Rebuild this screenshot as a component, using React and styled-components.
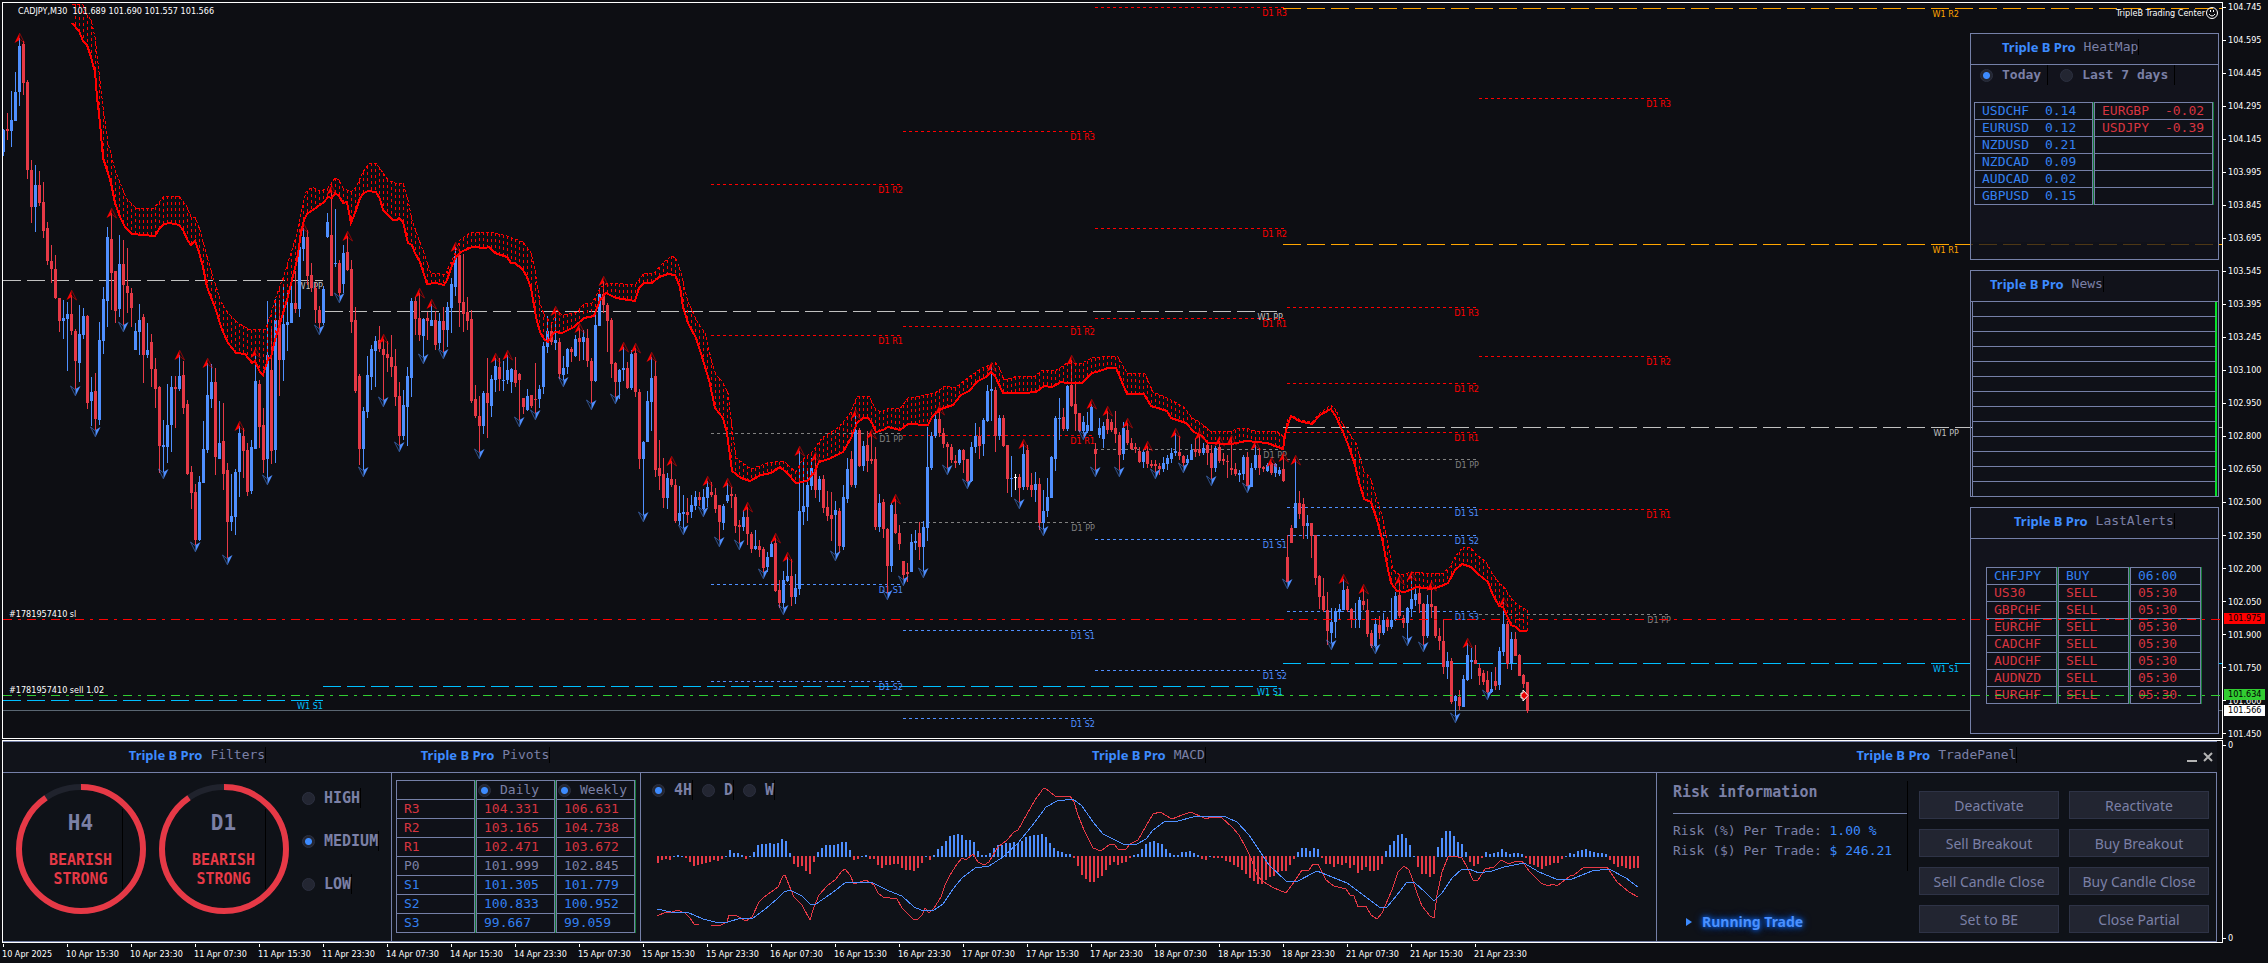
import React, { useState } from "react";
import styled, { createGlobalStyle, css } from "styled-components";

// ========================= chart data =========================
// one entry per M30 bar: direction (b = bull, r = bear, w = doji), high, body top, body bottom, low
const candles = `
b129,130,152,156 r113,129,131,140 b91,120,131,147 b72,92,121,121 b38,46,92,106 r41,44,83,95 r80,82,170,179 r160,170,207,223
b165,185,207,232 r171,185,203,206 r182,202,231,238 r222,228,261,265 r245,261,269,283 r255,269,298,299 r298,298,321,332 b300,318,321,339
b302,314,319,371 r295,314,331,335 r329,331,361,389 b305,334,363,382 b308,316,335,339 r315,316,403,409 b377,392,401,426 r373,391,419,430
b322,340,420,425 b287,299,341,354 b227,237,301,327 r213,239,273,310 r271,271,311,323 b235,264,309,317 r240,264,285,325 r248,286,293,313
r288,293,308,327 b323,331,350,350 b304,320,332,355 r314,317,355,383 b323,350,355,358 r334,342,369,387 r358,369,389,408 r386,387,446,473
b420,445,447,472 b384,425,447,463 b376,387,425,452 r376,387,389,428 b355,376,389,391 r361,375,408,414 r400,404,474,475 r466,472,493,509
r484,492,540,545 b476,482,540,541 b421,449,483,483 b363,395,450,453 b364,382,399,408 r368,382,457,475 b401,443,459,459 r403,441,474,490
r463,470,522,558 b474,516,522,531 b469,472,517,535 b426,433,472,497 r428,436,451,478 r443,450,492,496 b440,447,491,494 b353,381,449,449
r380,384,427,448 r408,425,460,473 b301,355,459,478 r328,370,451,464 b299,320,450,463 r300,320,360,396 b285,324,360,381 b290,322,325,351
b280,303,323,323 r271,303,309,313 b245,247,309,317 b228,237,249,261 r230,237,276,285 r263,275,288,292 r283,288,310,323 r306,310,323,328
b286,289,323,325 b213,222,237,238 r190,235,296,296 b209,263,264,267 r260,263,293,296 b245,253,284,293 r236,252,270,271 r260,269,322,333
r307,320,391,393 r374,376,449,465 b407,411,449,470 b356,375,412,418 b345,349,377,390 b336,341,351,387 r326,340,349,352 r339,349,355,400
r341,354,358,372 r335,357,367,377 r349,366,397,406 r382,396,436,445 b390,405,436,440 b367,376,407,446 b298,301,378,397 r297,301,319,335
r293,318,335,341 b318,319,336,357 r312,318,321,340 b304,320,326,326 r311,320,345,350 b313,321,343,349 r307,321,330,352 b302,307,330,347
b278,284,308,333 b247,256,287,296 r253,255,303,327 r254,302,314,332 r297,312,321,330 r310,319,401,403 r385,399,416,418 r396,416,426,452
b391,393,426,434 r358,393,403,438 b375,379,406,417 b358,366,380,392 r358,367,379,391 b361,380,381,391 b355,370,380,384 b368,369,382,393
r357,370,383,387 r373,374,380,420 r398,398,407,414 b389,396,410,411 r395,395,406,408 r363,399,400,413 b385,389,399,408 b342,346,387,394
b316,331,347,353 r323,331,342,345 b311,340,343,350 r338,342,374,379 b356,368,375,380 b348,349,367,374 r347,349,352,362 b335,339,356,357
r328,338,342,361 b330,337,342,360 r329,338,361,367 r358,361,381,403 b315,325,381,382 b288,294,326,326 r281,294,305,313 r303,305,321,352
r318,320,364,378 r362,363,382,397 b369,370,382,399 b347,368,370,381 r362,368,388,389 b350,354,388,390 r348,353,392,397 r389,392,459,469
b441,442,459,515 b391,401,442,442 b357,378,402,431 r361,376,470,477 r440,468,476,490 r458,474,498,508 b473,478,498,509 r461,479,485,487
r479,485,521,523 b486,513,521,525 b495,512,514,528 r498,512,515,523 b495,505,512,518 b491,497,506,510 r492,497,500,506 b489,497,509,510
b481,487,498,507 r482,492,495,497 r488,495,509,513 r505,505,522,540 b504,506,523,530 b483,495,501,503 r487,494,496,508 r494,497,526,533
r520,525,527,543 b510,517,527,531 r507,517,534,545 r532,534,549,553 b530,546,549,550 r540,546,550,557 r547,549,568,572 b552,557,567,572
b541,544,557,557 r538,543,591,592 r580,590,603,608 b571,580,603,608 b557,576,581,582 r559,576,597,606 b574,588,597,604 b451,511,589,595
b460,506,512,525 b470,485,507,521 b458,468,486,490 r457,470,490,498 b476,479,490,502 r475,479,508,513 r491,507,516,521 r492,515,519,541
b501,510,515,554 r508,511,546,553 b485,497,547,550 b458,469,499,503 r451,459,485,487 b414,430,485,488 r428,430,466,467 b441,446,466,471
r431,445,461,472 r434,459,461,464 r447,459,527,530 b494,503,527,532 r499,502,529,538 r528,529,566,593 b503,505,566,572 r499,514,533,534
r525,533,544,550 r561,561,575,579 r563,572,574,582 b534,542,572,572 b530,541,543,550 r522,533,547,560 b521,527,547,571 b427,467,528,541
b432,436,468,470 b415,419,436,438 r410,419,433,437 r428,433,444,448 r442,444,447,468 r444,447,460,463 r455,461,463,468 b449,450,463,465
r449,450,460,473 r459,459,481,482 b442,447,481,482 b423,436,447,453 r427,436,446,459 b418,420,444,456 b385,391,421,422 b367,389,391,421
r387,390,436,452 b415,418,436,440 r415,418,446,447 r445,445,479,493 b456,478,479,497 w474,477,478,490 r474,477,488,502 b444,454,487,490
r445,450,487,490 r473,485,490,497 b472,484,490,502 r478,484,523,530 b490,511,523,529 b478,497,511,517 b456,457,498,498 b416,418,459,471
b398,418,419,440 r408,417,429,431 b385,386,429,431 r360,385,406,407 r383,404,414,431 r413,413,431,432 b416,422,431,433 b412,425,431,433
b404,407,431,431 r443,449,454,470 b418,428,435,438 b422,426,439,448 r411,419,430,434 r419,422,430,432 r411,428,434,443 r432,435,455,470
b422,428,454,460 r423,430,443,445 r438,443,449,450 r443,447,449,453 r447,451,462,463 b450,452,462,468 r446,451,464,468 r460,464,466,468
r460,464,466,472 r463,466,469,475 b457,463,469,472 b455,458,464,470 b448,453,459,463 b433,451,453,456 r436,452,456,460 r455,456,463,466
b455,459,463,465 b444,450,460,460 r438,449,452,457 r435,449,453,456 b443,448,453,455 r442,445,453,465 r445,453,468,479 b446,448,468,472
r441,447,461,463 r453,459,461,465 r455,461,462,478 r440,468,470,475 r463,469,474,476 b470,473,475,482 b455,457,474,480 r452,457,486,486
b463,468,487,487 b445,455,468,470 r448,455,468,475 r466,467,469,472 b463,465,471,472 r462,463,473,475 b463,464,473,477 b467,470,474,476
r457,469,481,482 r535,557,582,582 r525,528,543,543 b460,503,528,528 r491,503,514,519 r498,504,526,539 b515,523,526,539 r523,523,536,558
r535,535,578,585 r575,576,597,609 r578,596,610,612 r592,610,631,645 b608,622,633,643 b608,611,622,638 b604,609,612,620 b579,590,610,610
r586,589,610,612 r608,609,619,628 b603,619,620,628 b597,600,620,628 r589,601,605,610 r599,610,634,637 r630,633,646,648 b618,624,646,647
r616,625,633,639 b613,620,633,635 r617,620,627,631 b598,620,627,629 b592,596,620,621 r580,595,616,618 r615,618,623,628 b607,608,623,639
b576,599,609,617 b587,594,600,606 r585,593,604,613 r603,604,636,645 b595,604,636,638 r586,604,607,618 r606,606,636,638 r628,636,641,650
r620,641,667,674 b652,661,667,679 r658,661,702,704 b695,696,701,716 r690,697,706,710 b675,679,707,707 b643,655,680,681 b648,660,662,679
r645,660,664,664 r664,668,676,685 r670,673,682,685 r671,680,692,693 b672,689,692,693 r667,681,686,690 b647,651,685,690 b602,624,652,656
r621,624,664,669 b632,639,663,670 r632,639,656,656 r654,655,676,676 r674,675,684,688 r682,682,711,713`
  .trim()
  .split(/\s+/)
  .map((c) => [c[0], ...c.slice(1).split(",").map(Number)]);

// bars that carry a fractal arrow
const fractalsUp = [
  4, 17, 27, 44, 51, 59, 63, 75, 82, 86, 95, 104, 107, 113, 123, 126, 138, 144, 150, 155, 158, 162, 167, 176, 181, 186, 193, 196,
  199, 203, 213, 217, 223, 234, 247, 255, 267, 272, 276, 281, 286, 293, 299, 304, 307, 313, 317, 320, 323, 335, 340, 349, 352, 357,
  366, 375,
];
const fractalsDown = [
  18, 23, 30, 40, 48, 56, 66, 79, 84, 90, 95, 99, 105, 110, 119, 129, 133, 140, 147, 153, 160, 170, 175, 179, 184, 190, 195, 208,
  221, 225, 230, 236, 241, 254, 260, 270, 273, 279, 288, 295, 302, 311, 321, 332, 343, 351, 355, 363, 371,
];

const toPoints = (str) => str.trim().split(/\s+/).map((p) => p.split(",").map(Number));

const bandLow = toPoints(`
72,23 79,31 83,41 87,45 91,57 95,72 97,97 100,123 103,158 108,173 111,183 115,203 120,217 125,227 132,234 143,235 155,236 159,229
164,224 170,223 179,225 183,230 188,241 191,245 195,241 199,252 203,267 207,287 216,310 221,327 228,343 236,353 245,354 252,363
255,361 260,372 263,375 268,359 271,357 275,340 281,320 287,300 292,280 297,260 301,233 304,220 307,214 317,207 324,202 328,197
332,198 335,193 339,196 343,203 347,202 351,223 355,213 360,198 364,193 368,191 376,192 380,199 383,210 388,215 393,220 397,220
399,218 403,222 408,243 412,245 415,253 420,262 427,284 436,283 444,285 447,280 451,268 456,257 461,252 472,247 485,248 489,247
495,253 507,257 511,263 515,263 523,270 527,277 531,288 536,317 540,332 544,339 548,342 551,337 555,332 562,333 574,327 584,318
594,316 600,300 606,293 616,298 635,301 639,288 644,283 652,283 659,277 668,274 675,275 680,287 683,307 688,323 696,338 703,360
709,380 715,408 723,418 727,433 732,471 741,478 750,481 761,475 771,473 780,467 787,473 796,483 807,481 814,473 819,462 829,459
843,452 851,438 857,423 863,418 868,418 872,423 876,432 883,430 888,427 900,430 908,424 928,425 932,417 941,409 953,405 961,395
969,391 978,381 986,377 991,372 995,376 1003,393 1024,393 1036,392 1044,386 1052,387 1061,382 1067,383 1082,383 1092,373 1100,371
1108,368 1116,368 1127,394 1144,394 1151,406 1167,411 1171,418 1186,423 1194,432 1202,436 1208,443 1231,444 1247,441 1267,443
1283,449 1286,430 1291,416 1299,421 1312,424 1320,415 1331,409 1336,417 1343,432 1349,447 1355,465 1359,482 1364,499 1371,502
1377,520 1383,543 1387,565 1391,583 1397,591 1405,592 1417,587 1431,589 1439,587 1448,583 1455,570 1462,564 1471,567 1478,574
1488,582 1492,593 1499,606 1503,607 1508,618 1511,625 1516,627 1520,631 1527,631`);

const bandHigh = toPoints(`
72,4 83,5 87,15 91,20 95,37 99,72 103,107 108,143 111,154 115,170 120,182 126,198 136,208 154,208 164,196 179,196 187,207 191,217
195,217 200,230 206,253 213,277 221,302 228,313 238,323 245,327 250,330 259,329 265,330 270,317 276,297 284,275 291,253 296,237
301,213 306,192 312,187 320,191 328,188 335,178 339,180 343,188 351,192 356,187 363,172 369,163 376,163 383,173 388,180 395,183
403,183 408,200 412,220 418,237 424,253 431,274 439,273 445,275 453,258 460,240 470,233 480,232 494,233 507,236 523,242 531,253
535,270 540,303 545,317 552,323 557,310 562,315 577,312 584,304 592,303 601,287 608,283 623,284 636,284 644,273 654,273 663,263
671,256 676,258 681,273 688,302 698,323 705,333 712,363 716,375 722,381 728,393 732,427 736,458 751,469 767,463 784,461 790,467
796,472 802,460 812,452 822,438 839,427 851,412 857,396 869,396 876,410 882,412 888,408 900,409 908,398 925,395 935,393 945,386
955,388 969,377 982,368 990,365 995,362 999,367 1004,380 1018,376 1035,376 1043,370 1055,371 1067,363 1082,363 1092,358 1108,356
1118,357 1127,373 1145,374 1153,392 1165,397 1184,407 1192,418 1200,422 1210,431 1231,431 1239,428 1249,429 1255,431 1276,431
1284,437 1288,419 1292,415 1300,420 1312,422 1320,413 1331,405 1336,410 1340,420 1349,433 1356,443 1364,472 1370,477 1374,490
1382,515 1387,540 1393,570 1400,575 1412,572 1419,572 1426,574 1443,573 1450,567 1455,557 1463,547 1470,547 1476,554 1486,562
1492,573 1499,583 1504,587 1511,598 1518,605 1527,610`);

const C = {
  red: "#ff0000",
  orange: "#ffa500",
  silver: "#c0c0c0",
  gray: "#808080",
  blue: "#4f8fff",
  sky: "#00bfff",
};

const dailyPivots = [
  { x: 711, levels: [["R2", 184], ["R1", 335], ["PP", 433], ["S1", 584], ["S2", 681]] },
  { x: 903, levels: [["R3", 131], ["R2", 326], ["R1", 435], ["PP", 522], ["S1", 630], ["S2", 718]] },
  { x: 1095, levels: [["R3", 7], ["R2", 228], ["R1", 318], ["PP", 449], ["S1", 539], ["S2", 670]] },
  { x: 1287, levels: [["R3", 307], ["R2", 383], ["R1", 432], ["PP", 459], ["S1", 507], ["S2", 535], ["S3", 611]] },
  { x: 1479, levels: [["R3", 98], ["R2", 356], ["R1", 509], ["PP", 614]] },
];

const weeklyPivots = [
  { name: "W1 PP", x: 3, end: 323, label: 323, y: 280, color: C.silver },
  { name: "W1 S1", x: 3, end: 323, label: 323, y: 700, color: C.sky },
  { name: "W1 PP", x: 325, end: 1277, label: 1283, y: 311, color: C.silver },
  { name: "W1 S1", x: 323, end: 1277, label: 1283, y: 686, color: C.sky },
  { name: "W1 R2", x: 1283, end: 4000, label: 1959, y: 8, color: C.orange },
  { name: "W1 R1", x: 1283, end: 4000, label: 1959, y: 244, color: C.orange },
  { name: "W1 PP", x: 1283, end: 4000, label: 1959, y: 427, color: C.silver },
  { name: "W1 S1", x: 1283, end: 4000, label: 1959, y: 663, color: C.sky },
];

const prices = [
  "104.745", "104.595", "104.445", "104.295", "104.145", "103.995", "103.845", "103.695",
  "103.545", "103.395", "103.245", "103.100", "102.950", "102.800", "102.650", "102.500",
  "102.350", "102.200", "102.050", "101.900", "101.750", "101.600", "101.450",
];

const times = [
  "10 Apr 2025", "10 Apr 15:30", "10 Apr 23:30", "11 Apr 07:30", "11 Apr 15:30", "11 Apr 23:30",
  "14 Apr 07:30", "14 Apr 15:30", "14 Apr 23:30", "15 Apr 07:30", "15 Apr 15:30", "15 Apr 23:30",
  "16 Apr 07:30", "16 Apr 15:30", "16 Apr 23:30", "17 Apr 07:30", "17 Apr 15:30", "17 Apr 23:30",
  "18 Apr 07:30", "18 Apr 15:30", "18 Apr 23:30", "21 Apr 07:30", "21 Apr 15:30", "21 Apr 23:30",
];

// ========================= panel data =========================
const gainers = [["USDCHF", "0.14"], ["EURUSD", "0.12"], ["NZDUSD", "0.21"], ["NZDCAD", "0.09"], ["AUDCAD", "0.02"], ["GBPUSD", "0.15"]];
const losers = [["EURGBP", "-0.02"], ["USDJPY", "-0.39"]];

const alerts = [
  ["CHFJPY", "BUY", "06:00"],
  ["US30", "SELL", "05:30"],
  ["GBPCHF", "SELL", "05:30"],
  ["EURCHF", "SELL", "05:30"],
  ["CADCHF", "SELL", "05:30"],
  ["AUDCHF", "SELL", "05:30"],
  ["AUDNZD", "SELL", "05:30"],
  ["EURCHF", "SELL", "05:30"],
];

const pivotRows = [
  ["R3", "104.331", "106.631", "down"],
  ["R2", "103.165", "104.738", "down"],
  ["R1", "102.471", "103.672", "down"],
  ["P0", "101.999", "102.845", "flat"],
  ["S1", "101.305", "101.779", "up"],
  ["S2", "100.833", "100.952", "up"],
  ["S3", "99.667", "99.059", "up"],
];

const filters = ["HIGH", "MEDIUM", "LOW"];
const newsRows = 13;

const tradeActions = [
  "Deactivate", "Reactivate",
  "Sell Breakout", "Buy Breakout",
  "Sell Candle Close", "Buy Candle Close",
  "Set to BE", "Close Partial",
];

const histogram = [
  -7, -4, -3, -4, 1, 2, 1, -2, -6, -10, -9, -8, -7, -6, -4, -5, -3, 1, 7, 4, 4, 2, -3, 1, 5, 12, 13, 13, 14, 13, 14, 18, 16, 4, -8,
  -11, -10, -15, -18, -6, 5, 9, 12, 12, 12, 13, 15, 15, 7, -4, -3, 1, 2, -3, -3, -9, -12, -9, -9, -8, -8, -12, -14, -14, -15, -12,
  -7, 1, -4, 2, 8, 11, 16, 21, 22, 23, 22, 17, 17, 15, 6, 2, 2, 4, 9, 12, 12, 14, 14, 15, 14, 16, 20, 21, 22, 22, 23, 20, 14, 9, 6,
  5, 3, 3, -2, -10, -19, -23, -26, -26, -22, -20, -14, -9, -6, -9, -7, -6, -2, 2, 3, 8, 13, 15, 16, 14, 13, 8, 4, 2, 2, 5, 5, 6, 4,
  2, -3, -4, 1, -2, -2, -2, -5, -6, -9, -11, -14, -18, -22, -25, -28, -28, -24, -21, -20, -16, -15, -15, -9, -3, 5, 9, 9, 6, 9, 8,
  -2, -8, -8, -11, -8, -9, -7, -12, -9, -17, -14, -11, -15, -15, -14, -8, 6, 12, 16, 22, 23, 19, 12, 1, -11, -18, -18, -21, -18,
  10, 19, 26, 26, 21, 15, 13, 5, -6, -10, -8, -2, 5, 3, 4, 5, 8, 5, 3, 4, 4, 3, -2, -8, -9, -11, -13, -10, -9, -7, -7, -3, 1, 4, 3,
  6, 7, 8, 6, 5, 4, 4, 3, -4, -8, -11, -10, -12, -13, -12, -12,
];

const macdStart = "16,143 25,139 29,140 36,137 44,140 49,145 53,151 58,152";
const macdLine = `70,152 80,152 86,149 88,142 96,143 105,148 111,144 118,129 123,124 137,114 142,103 144,102 148,112 153,124 161,132
169,147 173,134 178,122 186,113 194,107 201,98 204,96 209,102 213,111 219,109 225,107 233,112 237,120 242,124 256,126 261,135
268,142 273,147 277,146 281,142 284,135 288,140 293,135 300,124 304,112 309,102 316,91 321,85 325,87 332,81 337,89 343,92 348,89
357,74 366,67 373,59 377,57 386,41 394,27 402,16 404,15 414,23 425,24 429,23 433,29 437,42 443,57 447,65 452,75 460,78 469,71
473,71 477,76 485,76 489,71 497,67 505,53 512,41 519,39 531,46 541,42 550,39 565,46 570,44 581,45 591,54 598,62 605,75 610,85
616,102 621,108 633,115 645,120 653,109 661,97 668,97 672,91 677,91 685,107 693,113 705,116 709,122 713,123 717,134 725,133
730,142 736,146 741,140 751,117 757,99 763,93 768,97 771,105 776,120 781,133 789,143 793,145 796,122 801,99 807,84 813,83 821,85
826,94 832,107 837,107 844,96 853,94 860,87 868,91 875,88 881,88 888,98 900,110 907,113 912,111 916,113 929,103 933,102 943,94
966,94 976,109 988,119 997,124`;
const signalLine = `16,136 30,139 46,139 62,146 78,150 87,149 100,145 112,145 123,137 136,126 143,119 149,117 161,123 169,131 175,131
191,120 205,109 230,109 248,118 261,123 273,134 280,137 293,137 302,131 312,116 321,105 334,95 348,93 362,84 377,70 386,59 394,49
405,34 416,28 432,26 441,33 452,49 462,61 482,71 496,71 505,66 512,57 523,49 537,48 552,44 560,43 585,44 596,49 608,62 618,77
628,92 645,108 655,109 676,98 691,104 706,110 725,124 738,134 746,134 756,122 766,109 773,109 785,120 793,128 801,120 811,105
821,96 828,96 838,100 851,98 863,94 883,90 898,99 915,106 931,106 951,98 968,96 985,105 997,114`;

// ========================= chart pieces =========================
const candleColor = { b: "#4f8fff", r: "#e63946", w: "#ffffff" };

const valueAt = (pts, x) => {
  const i = pts.findIndex((p) => p[0] >= x);
  if (i <= 0) return pts[i === 0 ? 0 : pts.length - 1][1];
  const [x1, y1] = pts[i - 1];
  const [x2, y2] = pts[i];
  return Math.round(y1 + ((y2 - y1) * (x - x1)) / (x2 - x1));
};

const Band = () => {
  const rungs = [];
  for (let x = 75; x <= 1527; x += 4) {
    rungs.push(<line key={x} x1={x} x2={x} y1={valueAt(bandHigh, x)} y2={valueAt(bandLow, x)} />);
  }
  return (
    <g fill="none" stroke={C.red} shapeRendering="crispEdges">
      <g strokeDasharray="3 3">{rungs}</g>
      <polyline points={bandHigh.join(" ")} strokeDasharray="3 2" />
      <polyline points={bandLow.join(" ")} strokeWidth="2" />
    </g>
  );
};

const Candles = () => (
  <g shapeRendering="crispEdges">
    {candles.map(([dir, high, top, bottom, low], i) => (
      <g key={i} fill={candleColor[dir]}>
        <rect x={3 + 4 * i} y={high} width="1" height={Math.max(low - high, 1)} />
        <rect x={2 + 4 * i} y={top} width="3" height={Math.max(bottom - top, 1)} />
      </g>
    ))}
  </g>
);

const Fractals = () => (
  <g>
    {fractalsUp.map((i) => (
      <g key={i} transform={`translate(${3.5 + 4 * i} ${candles[i][1] - 5})`}>
        <path d="M0 0 L-5 10 L0 7 Z" fill="#ff0000" />
        <path d="M0 0 L5 10 L0 6" fill="none" stroke="#ff0000" strokeOpacity="0.5" />
      </g>
    ))}
    {fractalsDown.map((i) => (
      <g key={i} transform={`translate(${3.5 + 4 * i} ${candles[i][4] + 7})`}>
        <path d="M0 0 L5 -10 L0 -7 Z" fill="#4f8fff" />
        <path d="M0 0 L-5 -10 L0 -6" fill="none" stroke="#4f8fff" strokeOpacity="0.5" />
      </g>
    ))}
  </g>
);

const pivotColor = (name) => (name === "PP" ? C.gray : name[0] === "R" ? C.red : C.blue);

const Pivots = () => (
  <g>
    <g shapeRendering="crispEdges">
      {dailyPivots.map((day) =>
        day.levels.map(([name, y]) => (
          <line
            key={day.x + name}
            x1={day.x}
            x2={day.x + 189}
            y1={y + 0.5}
            y2={y + 0.5}
            stroke={pivotColor(name)}
            strokeDasharray="3 3"
          />
        ))
      )}
      {weeklyPivots.map((p, i) => (
        <line key={i} x1={p.x} x2={p.end} y1={p.y + 0.5} y2={p.y + 0.5} stroke={p.color} strokeDasharray="18 6" />
      ))}
    </g>
    {dailyPivots.map((day) =>
      day.levels.map(([name, y]) => (
        <Label key={day.x + name} x={day.x + 192} y={y + 9} textAnchor="end" fill={pivotColor(name)}>
          D1 {name}
        </Label>
      ))
    )}
    {weeklyPivots.map((p, i) => (
      <Label key={i} x={p.label} y={p.y + 9} textAnchor="end" fill={p.color}>
        {p.name}
      </Label>
    ))}
  </g>
);

const PriceChart = () => (
  <ChartSvg>
    {/* data is stored from the window corner, the frame takes 3px */}
    <g transform="translate(-3 -3)">
      <line x1="3" x2="4000" y1="710.5" y2="710.5" stroke="#5a6672" shapeRendering="crispEdges" />
      <Pivots />
      <Candles />
      <Fractals />
      <Band />
      <Label x="18" y="14" fill="#fff">
        {"CADJPY,M30  101.689 101.690 101.557 101.566"}
      </Label>
      <Label x="9" y="617" fill="#fff">#1781957410 sl</Label>
      <Label x="9" y="693" fill="#fff">#1781957410 sell 1.02</Label>
    </g>
  </ChartSvg>
);

const OrderLines = () => (
  <OrderSvg aria-hidden="true">
    <g transform="translate(-3 -3)">
      <g shapeRendering="crispEdges" strokeDasharray="9 6 3 6">
        <line x1="3" x2="4000" y1="619.5" y2="619.5" stroke="#ff0000" />
        <line x1="3" x2="4000" y1="695.5" y2="695.5" stroke="#32cd32" />
      </g>
      <path d="M1521 693 h2 v-3 l5 5.500 l-5 5.500 v-3 h-2 Z" fill="#e60000" stroke="#fff" />
    </g>
  </OrderSvg>
);

const MacdChart = () => (
  <ChartSvg>
    <g shapeRendering="crispEdges">
      {histogram.map((v, i) => (
        <rect key={i} x={16 + 4 * i} y={v > 0 ? 84 - v : 83} width="2" height={Math.abs(v)} fill={v > 0 ? "#4f8fff" : "#e63946"} />
      ))}
      <g fill="none">
        <polyline points={macdStart} stroke="#e63946" />
        <polyline points={macdLine} stroke="#e63946" />
        <polyline points={signalLine} stroke="#4f8fff" />
      </g>
    </g>
  </ChartSvg>
);

const Gauge = ({ name, value }) => {
  const len = 2 * Math.PI * 62;
  return (
    <GaugeBox>
      <svg width="130" height="130" viewBox="0 0 130 130">
        <g fill="none" strokeWidth="6" transform="rotate(-90 65 65)">
          <circle cx="65" cy="65" r="62" stroke="#20232d" />
          <circle cx="65" cy="65" r="62" stroke="#e63946" strokeDasharray={`${len * value} ${len}`} />
        </g>
      </svg>
      <GaugeText>
        <GaugeName>{name}</GaugeName>
        BEARISH
        <br />
        STRONG
      </GaugeText>
    </GaugeBox>
  );
};

const Brand = ({ children }) => (
  <Title>
    <BrandName>Triple B Pro</BrandName>
    <TitleName>{children}</TitleName>
  </Title>
);

const App = () => {
  // ========================= hooks =========================
  const [range, setRange] = useState("Today");
  const [filter, setFilter] = useState("MEDIUM");
  const [period, setPeriod] = useState("4H");
  const [shown, setShown] = useState({ Daily: true, Weekly: true });

  return (
    <Page>
      <GlobalStyle />
      <ChartFrame>
        <PriceChart />
        <Side>
          <Watermark>
            TripleB Trading Center
            <svg width="14" height="14" viewBox="0 0 14 14" fill="none" stroke="#fff">
              <circle cx="7" cy="7" r="5.500" />
              <path d="M4 8 Q7 12 10 8 M5.500 4 v2 M8.500 4 v2" />
            </svg>
          </Watermark>
          <SidePanel>
            <SideHeader $indent={32}>
              <Brand>HeatMap</Brand>
            </SideHeader>
            <HeatBody>
              <RangeRow>
                {["Today", "Last 7 days"].map((r) => (
                  <Choice key={r} $size={13} $gap={9}>
                    <Radio type="radio" name="range" checked={range === r} onChange={() => setRange(r)} />
                    <ChoiceText $pad={6}>{r}</ChoiceText>
                  </Choice>
                ))}
              </RangeRow>
              <Grid $spacing={1} $row={17}>
                <tbody>
                  {gainers.map(([pair, change], i) => (
                    <tr key={pair}>
                      <Cell $width={119} $tone="up">
                        <Pair>{pair}</Pair>
                        {change}
                      </Cell>
                      <Cell $width={119} $tone="down">
                        {losers[i] && (
                          <>
                            <Pair>{losers[i][0]}</Pair>
                            {losers[i][1]}
                          </>
                        )}
                      </Cell>
                    </tr>
                  ))}
                </tbody>
              </Grid>
            </HeatBody>
          </SidePanel>
          <SidePanel>
            <SideHeader $indent={20}>
              <Brand>News</Brand>
            </SideHeader>
            <NewsList>
              {Array.from({ length: newsRows }, (_, i) => (
                <NewsRow key={i} />
              ))}
            </NewsList>
          </SidePanel>
          <SidePanel>
            <SideHeader $indent={44}>
              <Brand>LastAlerts</Brand>
            </SideHeader>
            <AlertsBody>
              <Grid $spacing={1} $row={17}>
                <tbody>
                  {alerts.map((row, i) => (
                    <tr key={i}>
                      {row.map((value) => (
                        <Cell key={value} $width={71} $tone={row[1] === "BUY" ? "up" : "down"}>
                          {value}
                        </Cell>
                      ))}
                    </tr>
                  ))}
                </tbody>
              </Grid>
            </AlertsBody>
          </SidePanel>
        </Side>
        <OrderLines />
      </ChartFrame>

      <PriceAxis>
        {prices.map((p) => (
          <Price key={p}>{p}</Price>
        ))}
        <Badge $top={613} $bg="#ff0000">101.975</Badge>
        <Badge $top={689} $bg="#32cd32">101.634</Badge>
        <Badge $top={705} $bg="#ffffff">101.566</Badge>
      </PriceAxis>

      <PanelFrame>
        <Panels>
          <Section>
            <Header>
              <span />
              <Brand>Filters</Brand>
            </Header>
            <FiltersBody>
              <Gauge name="H4" value={0.903} />
              <Gauge name="D1" value={0.903} />
              <FilterList>
                {filters.map((f) => (
                  <Choice key={f} $size={15} $gap={9}>
                    <Radio type="radio" name="filter" checked={filter === f} onChange={() => setFilter(f)} />
                    <ChoiceText>{f}</ChoiceText>
                  </Choice>
                ))}
              </FilterList>
            </FiltersBody>
          </Section>

          <Section>
            <Header $shift={62}>
              <span />
              <Brand>Pivots</Brand>
            </Header>
            <PivotsBody>
              <Grid $spacing={1} $row={19}>
                <thead>
                  <tr>
                    <Cell as="th" $width={79} aria-label="Level" />
                    {["Daily", "Weekly"].map((p) => (
                      <HeadCell as="th" key={p} $width={79}>
                        <HeadLabel>
                          <Radio
                            type="checkbox"
                            checked={shown[p]}
                            onChange={() => setShown({ ...shown, [p]: !shown[p] })}
                          />
                          {p}
                        </HeadLabel>
                      </HeadCell>
                    ))}
                  </tr>
                </thead>
                <tbody>
                  {pivotRows.map(([level, day, week, tone]) => (
                    <tr key={level}>
                      <Cell $width={79} $tone={tone}>{level}</Cell>
                      <Cell $width={79} $tone={tone}>{day}</Cell>
                      <Cell $width={79} $tone={tone}>{week}</Cell>
                    </tr>
                  ))}
                </tbody>
              </Grid>
            </PivotsBody>
          </Section>

          <Section>
            <Header>
              <span />
              <Brand>MACD</Brand>
            </Header>
            <MacdBody>
              <MacdChart />
              <PeriodRow>
                {["4H", "D", "W"].map((p) => (
                  <Choice key={p} $size={15} $gap={9}>
                    <Radio type="radio" name="period" checked={period === p} onChange={() => setPeriod(p)} />
                    <ChoiceText>{p}</ChoiceText>
                  </Choice>
                ))}
              </PeriodRow>
            </MacdBody>
          </Section>

          <Section>
            <Header>
              <span />
              <Brand>TradePanel</Brand>
              <WindowButtons>
                <IconButton aria-label="Minimize">
                  <svg width="10" height="10" stroke="#b4b4b4" strokeWidth="2">
                    <path d="M0 9 H10" />
                  </svg>
                </IconButton>
                <IconButton aria-label="Close">
                  <svg width="10" height="10" stroke="#b4b4b4" strokeWidth="2">
                    <path d="M1 1 L9 9 M9 1 L1 9" />
                  </svg>
                </IconButton>
              </WindowButtons>
            </Header>
            <TradeBody>
              <RiskColumn>
                <RiskInfo>
                  <RiskTitle>Risk information</RiskTitle>
                  <RiskLine>
                    Risk (%) Per Trade: <strong>1.00 %</strong>
                  </RiskLine>
                  <RiskLine>
                    Risk ($) Per Trade: <strong>$ 246.21</strong>
                  </RiskLine>
                </RiskInfo>
                <Running>
                  <svg width="6" height="8" fill="#3d8bff">
                    <path d="M0 0 L6 4 L0 8 Z" />
                  </svg>
                  Running Trade
                </Running>
              </RiskColumn>
              <Actions>
                {tradeActions.map((a) => (
                  <ActionButton key={a}>{a}</ActionButton>
                ))}
              </Actions>
            </TradeBody>
          </Section>
        </Panels>
      </PanelFrame>

      <PriceAxis>
        <Price>0</Price>
        <Price>0</Price>
      </PriceAxis>

      <TimeAxis>
        {times.map((t) => (
          <Time key={t}>{t}</Time>
        ))}
      </TimeAxis>
    </Page>
  );
};

// ========================= styles =========================
const slate = "#7580a8";
const mono = `"DejaVu Sans Mono", monospace`;
const small = `"DejaVu Sans Condensed", "DejaVu Sans", sans-serif`;

const GlobalStyle = createGlobalStyle`
  * {
    box-sizing: border-box;
  }
  body {
    margin: 0;
    background: #0d0e13;
    color: #7b80a6;
    font-family: "Noto Sans", sans-serif;
  }
`;

const Page = styled.div`
  min-height: 100vh;
  padding: 2px 0 0 2px;
  display: grid;
  grid-template-columns: minmax(0, 1fr) 45px;
  grid-template-rows: minmax(737px, 1fr) 203px 19px;
  row-gap: 1px;
  overflow: hidden;
`;

const ChartFrame = styled.main`
  border: 1px solid #fff;
  display: grid;
  grid-template-columns: minmax(0, 1fr);
  overflow: hidden;
  > * {
    grid-area: 1 / 1;
  }
`;

const ChartSvg = styled.svg`
  width: 100%;
  height: 100%;
`;

const OrderSvg = styled(ChartSvg)`
  pointer-events: none;
`;

const Label = styled.text`
  font: 9px ${small};
  white-space: pre;
`;

const Side = styled.aside`
  justify-self: end;
  width: 249px;
  margin-right: 3px;
  display: flex;
  flex-direction: column;
  gap: 10px;
`;

const Watermark = styled.div`
  height: 20px;
  padding-bottom: 1px;
  display: flex;
  align-items: center;
  justify-content: flex-end;
  color: #fff;
  font: 9px ${small};
`;

const SidePanel = styled.section`
  height: 227px;
  border: 1px solid ${slate};
  display: flex;
  flex-direction: column;
`;

const SideHeader = styled.header`
  height: 31px;
  flex: none;
  padding-left: ${(p) => p.$indent - 1}px;
  padding-bottom: 5px;
  border-bottom: 1px solid ${slate};
  background: #11121a;
  display: flex;
  align-items: center;
`;

const Title = styled.h2`
  margin: 0;
  display: flex;
  align-items: center;
  gap: 8px;
  line-height: 16px;
`;

const BrandName = styled.span`
  color: #3d8bff;
  font-size: 13px;
  font-weight: 700;
`;

const TitleName = styled.span`
  border-right: 1px solid #000;
  font: 13px/16px ${mono};
`;

const HeatBody = styled.div`
  flex: 1;
  margin-bottom: 17px;
  padding-left: 2px;
  background: #12131c;
  box-shadow: 0 17px 0 rgba(18, 19, 28, 0.75);
`;

const RangeRow = styled.div`
  padding: 0 0 0 7px;
  margin-bottom: 17px;
  display: flex;
  gap: 12px;
`;

const Choice = styled.label`
  display: flex;
  align-items: center;
  gap: ${(p) => p.$gap}px;
  cursor: pointer;
  font: bold ${(p) => p.$size}px/20px ${mono};
`;

const ChoiceText = styled.span`
  padding-right: ${(p) => p.$pad || 0}px;
  border-right: 1px solid #000;
`;

const Radio = styled.input`
  appearance: none;
  flex: none;
  width: 13px;
  height: 13px;
  margin: 0;
  border: 1px solid #2c3040;
  border-radius: 50%;
  background: #232632;
  cursor: pointer;
  &:checked {
    background: radial-gradient(circle, #3d8bff 3px, #232632 4px);
  }
`;

const Grid = styled.table`
  border-collapse: separate;
  border-spacing: ${(p) => p.$spacing}px 0;
  table-layout: fixed;
  font: 13px/14px ${mono};
  tr {
    height: ${(p) => p.$row}px;
  }
  /* the first row also carries the top border */
  > :first-child > tr:first-child {
    height: ${(p) => p.$row + 1}px;
  }
  > :first-child > tr:first-child > * {
    border-top: 1px solid ${slate};
  }
`;

const tones = { up: "#3480f0", down: "#d83540", flat: "#7b80a6" };

const Cell = styled.td`
  width: ${(p) => p.$width}px;
  padding: 0 0 0 7px;
  border: 1px solid ${slate};
  border-top: none;
  background: #0f1118;
  box-shadow: 1px 0 0 #147a35;
  color: ${(p) => tones[p.$tone] || tones.flat};
  font-weight: 400;
  text-align: left;
`;

const HeadCell = styled(Cell)`
  padding-left: 1px;
`;

const HeadLabel = styled.label`
  display: flex;
  align-items: center;
  gap: 9px;
  cursor: pointer;
`;

const Pair = styled.span`
  margin-right: 16px;
`;

const NewsList = styled.ul`
  margin: 0;
  padding: 0 0 0 1px;
  list-style: none;
  flex: 1;
  display: flex;
  flex-direction: column;
  border-right: 1px solid #11121a;
`;

const NewsRow = styled.li`
  flex: 1;
  border-left: 1px solid ${slate};
  border-right: 2px solid #08e02c;
  border-bottom: 1px solid ${slate};
  background: #0f1118;
  &:last-child {
    border-bottom: none;
  }
`;

const AlertsBody = styled.div`
  flex: 1;
  padding: 28px 0 0 14px;
  background: #12131c;
`;

const PriceAxis = styled.div`
  position: relative;
  display: flex;
  flex-direction: column;
  justify-content: space-between;
  color: #fff;
  font: 9px/10px ${small};
`;

const Price = styled.span`
  display: flex;
  align-items: center;
  gap: 2px;
  &::before {
    content: "";
    width: 3px;
    height: 1px;
    background: #fff;
  }
`;

const Badge = styled.span`
  position: absolute;
  top: ${(p) => p.$top - 2}px;
  left: 1px;
  width: 41px;
  padding-left: 4px;
  line-height: 11px;
  color: #000;
  background: ${(p) => p.$bg};
`;

const PanelFrame = styled.div`
  border: 1px solid #fff;
  padding-right: 5px;
`;

const Panels = styled.div`
  height: 100%;
  border: solid ${slate};
  border-width: 1px 0;
  background: #11131a;
  display: grid;
  grid-template-columns: 389px 249px minmax(0, 1fr) 560px;
`;

const Section = styled.section`
  display: flex;
  flex-direction: column;
  min-width: 0;
`;

const Header = styled.header`
  height: 31px;
  padding: 0 ${(p) => p.$shift || 0}px 4px 0;
  border-bottom: 1px solid ${slate};
  display: grid;
  grid-template-columns: 1fr auto 1fr;
  align-items: center;
`;

const sectionBody = css`
  flex: 1;
  min-height: 0;
  border-right: 1px solid ${slate};
  background: #0f1218;
`;

const FiltersBody = styled.div`
  ${sectionBody}
  display: flex;
  gap: 13px;
  padding: 11px 0 0 13px;
`;

const GaugeBox = styled.div`
  width: 130px;
  height: 130px;
  display: grid;
  place-items: center;
  > * {
    grid-area: 1 / 1;
  }
`;

const GaugeText = styled.div`
  width: 83px;
  padding-top: 2px;
  border-right: 1px solid #000;
  color: #e63946;
  font: bold 15px/19px ${mono};
  text-align: center;
`;

const GaugeName = styled.div`
  margin-bottom: 16px;
  color: #7b80a6;
  font-size: 21px;
  line-height: 24px;
`;

const FilterList = styled.div`
  padding: 4px 0 0;
  display: flex;
  flex-direction: column;
  align-items: flex-start;
  gap: 23px;
`;

const PivotsBody = styled.div`
  ${sectionBody}
  padding: 7px 0 0 3px;
`;

const MacdBody = styled.div`
  ${sectionBody}
  display: grid;
  grid-template-columns: minmax(0, 1fr);
  > * {
    grid-area: 1 / 1;
  }
`;

const PeriodRow = styled.div`
  padding: 7px 0 0 11px;
  display: flex;
  align-items: flex-start;
  gap: 9px;
`;

const WindowButtons = styled.div`
  padding: 4px 4px 0 0;
  display: flex;
  justify-content: flex-end;
  gap: 6px;
`;

const IconButton = styled.button`
  padding: 0;
  border: none;
  background: transparent;
  cursor: pointer;
  line-height: 0;
`;

const TradeBody = styled.div`
  ${sectionBody}
  padding: 8px 7px 6px 16px;
  display: flex;
  gap: 11px;
`;

const RiskColumn = styled.div`
  flex: 1;
  display: flex;
  flex-direction: column;
  justify-content: space-between;
`;

const RiskInfo = styled.div`
  height: 90px;
  border-right: 1px solid #000;
`;

const RiskTitle = styled.h3`
  margin: 0 0 7px;
  padding-bottom: 10px;
  border-bottom: 1px solid ${slate};
  font: bold 15px/22px ${mono};
`;

const RiskLine = styled.p`
  margin: 0;
  font: 13px/20px ${mono};
  strong {
    color: #3d8bff;
    font-weight: 400;
  }
`;

const Running = styled.div`
  padding: 0 0 3px 13px;
  display: flex;
  align-items: center;
  gap: 10px;
  color: #4a90ff;
  font-size: 14px;
  font-weight: 700;
  line-height: 20px;
  text-shadow: 0 0 5px #0a6cff, 0 0 9px #0a50d0;
`;

const Actions = styled.div`
  padding-top: 10px;
  display: grid;
  grid-template-columns: 140px 140px;
  grid-auto-rows: 28px;
  gap: 10px;
`;

const ActionButton = styled.button`
  padding: 0;
  border: 1px solid #2e3346;
  background: #222531;
  color: #7b80a6;
  font: 14px "Noto Sans", sans-serif;
  white-space: nowrap;
  cursor: pointer;
`;

const TimeAxis = styled.div`
  display: flex;
  color: #fff;
  font: 9px/12px ${small};
`;

const Time = styled.span`
  flex: 0 0 64px;
  white-space: nowrap;
  &::before {
    content: "";
    display: block;
    width: 1px;
    height: 3px;
    margin: 0 0 1px 1px;
    background: #fff;
  }
`;

export default App;
